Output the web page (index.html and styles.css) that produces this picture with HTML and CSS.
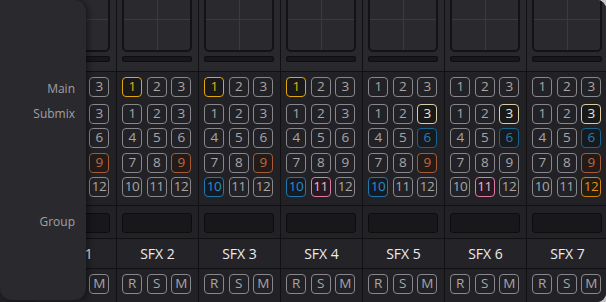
FILE: index.html
```html
<!DOCTYPE html>
<html lang="en">
<head>
  <meta charset="UTF-8">
  <title>Mixer Routing</title>
  <link rel="stylesheet" href="styles.css">
</head>
<body>
  <div class="window">
    <div class="strips" id="strips"></div>
    <div class="panel">
      <div class="lbl main">Main</div>
      <div class="lbl submix">Submix</div>
      <div class="lbl group">Group</div>
    </div>
  </div>
  <script>
    // highlight colours per button: key "row-number"
    const strips = [
      { name:'SFX 1', cut:true, hl:{'0-1':'yel','3-9':'cop'} },
      { name:'SFX 2', hl:{'0-1':'yel','3-9':'cop'} },
      { name:'SFX 3', hl:{'0-1':'yel','3-9':'cop','4-10':'blu'} },
      { name:'SFX 4', hl:{'0-1':'yel','4-10':'blu','4-11':'pnk'} },
      { name:'SFX 5', hl:{'1-3':'crm','2-6':'tea','3-9':'cop','4-10':'blu'} },
      { name:'SFX 6', hl:{'1-3':'crm','2-6':'tea','4-11':'pnk'} },
      { name:'SFX 7', hl:{'1-3':'crm','2-6':'tea','3-9':'cop','4-12':'org'} }
    ];
    const rows = [[1,2,3],[1,2,3],[4,5,6],[7,8,9],[10,11,12]];
    let html = '';
    strips.forEach(s => {
      let r = '';
      rows.forEach((nums, ri) => {
        r += `<div class="btns ${ri===0?'first':''}">` +
          nums.map(n => `<span class="b ${s.hl[ri+'-'+n]||''}">${n}</span>`).join('') + '</div>';
      });
      html += `<div class="strip ${s.cut?'cut':''}">
        <div class="sec pads"><div class="pad"><i class="vl"></i><i class="hl"></i></div><div class="bar"></div></div>
        <div class="sec route">${r}</div>
        <div class="sec grp"><div class="gbox"></div></div>
        <div class="sec nm"><span>${s.name}</span></div>
        <div class="sec rsm"><div class="btns"><span class="b">R</span><span class="b">S</span><span class="b">M</span></div></div>
      </div>`;
    });
    document.getElementById('strips').innerHTML = html;
  </script>
</body>
</html>
```
FILE: styles.css
```css
body { margin:0; background:#c4c4c6; font-family:"Open Sans", "Noto Sans", sans-serif; }
.window { position:relative; width:606px; height:302px; overflow:hidden; background:#202024; border-radius:0 9px 9px 0; }
.strips { display:flex; padding-left:35px; }
.strip { flex:0 0 82px; width:82px; border-right:1px solid #111114; box-sizing:border-box; display:flex; flex-direction:column; }
.sec { border-bottom:1px solid #111114; box-sizing:border-box; }
.pads { height:72px; background:#29292d; padding:0 6px 0 5px; overflow:hidden; }
.pad { position:relative; height:72px; margin-top:-20px; border:2px solid #131316; border-radius:5px; background:#2a2a2e; box-sizing:border-box; }
.pad .vl { position:absolute; left:50%; top:0; bottom:0; width:1px; background:#3a3a3f; }
.pad .hl { position:absolute; left:0; right:0; top:37px; height:1px; background:#3a3a3f; }
.bar { height:6px; margin-top:4px; background:#18181b; border:1px solid #0e0e10; border-radius:2px; box-sizing:border-box; }
.route { height:134px; padding:5px 0 0 5px; background:#222226; }
.btns { display:flex; gap:4.5px; margin-bottom:4.5px; }
.btns.first { margin-bottom:6.5px; }
.b { width:20px; height:20px; box-sizing:border-box; border:1.5px solid #88888c; border-radius:4px; color:#a6a6aa; font-size:13.5px; line-height:17px; text-align:center; letter-spacing:-0.5px; }
.b.yel { border-color:#e2a60a; color:#e8ae14; background:#19191b; }
.b.cop { border-color:#a65a36; color:#c0673c; background:#231b18; }
.b.blu { border-color:#1f78ad; color:#2b8cc8; background:#161a20; }
.b.pnk { border-color:#e27aa8; color:#f4b2d0; background:#241a20; }
.b.crm { border-color:#d9cfa4; color:#ece5c8; background:#19191a; }
.b.tea { border-color:#16658c; color:#2182b2; background:#16191d; }
.b.org { border-color:#cc8410; color:#dc9316; background:#221c12; }
.cut .btns .b:nth-child(-n+2) { visibility:hidden; }
.grp { height:33px; padding:7px 6px 0 5px; background:#222226; }
.gbox { height:20px; background:#18181b; border:1px solid #0d0d0f; border-radius:3px; box-sizing:border-box; }
.nm { height:30px; background:#242428; color:#ececee; font-size:14px; line-height:29px; text-align:center; }
.rsm { height:34px; padding:5px 0 0 5px; background:#222226; border-bottom:0; }
.panel { position:absolute; left:0; top:0; width:86px; height:300px; background:#2a2a2e; border-radius:0 12px 12px 12px; box-shadow:2px 0 6px rgba(0,0,0,0.45); }
.lbl { position:absolute; right:11px; color:#a0a0a4; font-size:12px; }
.lbl.main { top:80px; }
.lbl.submix { top:105px; }
.lbl.group { top:213px; }
```
